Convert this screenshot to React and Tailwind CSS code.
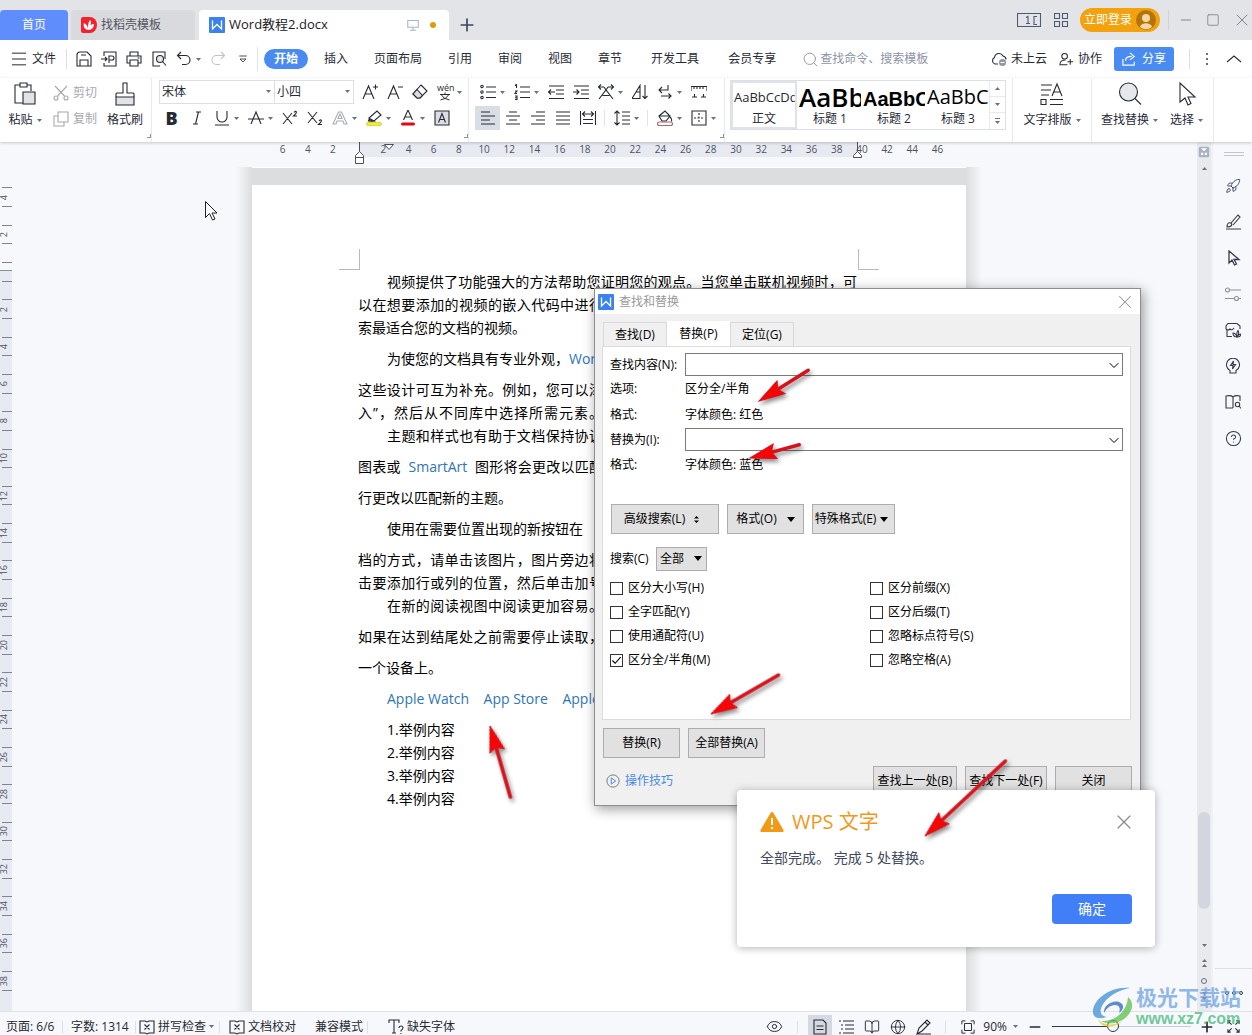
import React, { useState } from 'react';
import { Rocket, HelpCircle, Globe, BookOpen, Minus, Plus, Search, Square, X, Menu, Eye } from 'lucide-react';

const hRuler = ['6', '4', '2', '', '2', '4', '6', '8', '10', '12', '14', '16', '18', '20', '22', '24', '26', '28', '30', '32', '34', '36', '38', '40', '42', '44', '46'];
const vRuler = ['4', '2', '', '2', '4', '6', '8', '10', '12', '14', '16', '18', '20', '22', '24', '26', '28', '30', '32', '34', '36', '38'];

// tall: line has extra space above, full: line is justified to the column
const docLines = [
    { text: '以在想要添加的视频的嵌入代码中进行', full: true },
    { text: '索最适合您的文档的视频。' },
    { text: ['为使您的文档具有专业外观，', { blue: 'Word' }], indent: true, tall: true },
    { text: '这些设计可互为补充。例如，您可以添', tall: true, full: true },
    { text: '入”，然后从不同库中选择所需元素。', full: true },
    { text: '主题和样式也有助于文档保持协调', indent: true, full: true },
    { text: ['图表或\u00a0\u00a0', { blue: 'SmartArt' }, '\u00a0\u00a0图形将会更改以匹配'], tall: true, full: true },
    { text: '行更改以匹配新的主题。', tall: true },
    { text: '使用在需要位置出现的新按钮在', indent: true, tall: true },
    { text: '档的方式，请单击该图片，图片旁边将', tall: true, full: true },
    { text: '击要添加行或列的位置，然后单击加号', full: true },
    { text: '在新的阅读视图中阅读更加容易。', indent: true, full: true },
    { text: '如果在达到结尾处之前需要停止读取，', tall: true, full: true },
    { text: '一个设备上。', tall: true },
    { text: [{ blue: 'Apple Watch' }, '\u00a0\u00a0\u00a0 ', { blue: 'App Store' }, '\u00a0\u00a0\u00a0 ', { blue: 'Apple' }], indent: true, tall: true },
    { text: '1.举例内容', indent: true, tall: true },
    { text: '2.举例内容', indent: true },
    { text: '3.举例内容', indent: true },
    { text: '4.举例内容', indent: true },
];

const leftOptions = [
    { id: 'case', label: '区分大小写(H)' },
    { id: 'whole', label: '全字匹配(Y)' },
    { id: 'wild', label: '使用通配符(U)' },
    { id: 'width', label: '区分全/半角(M)', checked: true },
];

const rightOptions = [
    { id: 'prefix', label: '区分前缀(X)' },
    { id: 'suffix', label: '区分后缀(T)' },
    { id: 'punct', label: '忽略标点符号(S)' },
    { id: 'space', label: '忽略空格(A)' },
];

function Icon({ children, className = 'size-4', box = '0 0 16 16' }) {
    return (
        <svg viewBox={box} fill="none" stroke="currentColor" strokeWidth="1.1" className={`shrink-0 ${className}`} aria-hidden="true">
            {children}
        </svg>
    );
}

function Caret({ className = '' }) {
    return (
        <svg viewBox="0 0 5 3" className={`w-[5px] h-[3px] shrink-0 ${className}`} aria-hidden="true">
            <path d="M0 0h5L2.5 3z" fill="#6b7080" />
        </svg>
    );
}

function Tool({ label, children, caret, active }) {
    return (
        <div className="flex items-center">
            <button type="button" aria-label={label} className={`w-[25px] h-6 flex items-center justify-center ${active ? 'bg-[#d9dee5]' : ''}`}>
                {children}
            </button>
            {caret && <span className="w-[9px] flex items-center"><Caret /></span>}
        </div>
    );
}

function WpsLogo({ className }) {
    return (
        <svg viewBox="0 0 16 16" className={`shrink-0 ${className}`} aria-hidden="true">
            <rect width="16" height="16" rx="1" fill="#3b82ee" />
            <path d="M3.500 3.500v8.500l4.500-4.500 4.500 4.500V3.500" fill="none" stroke="#fff" strokeWidth="1.3" />
        </svg>
    );
}

function TitleBar() {
    return (
        <header className="h-10 bg-[#e2e4e8] flex items-end text-[13px]">
            <button type="button" className="w-[68px] h-[30px] bg-[#5f8dfb] text-white text-xs rounded-t-sm">首页</button>
            <button type="button" className="ml-[3px] w-[124px] h-[30px] bg-[#d9dadd] rounded-t-sm flex items-center gap-1 pl-[10px] text-xs text-[#50535e]">
                <svg viewBox="0 0 16 16" className="size-4" aria-hidden="true">
                    <path d="M2 0h7a7 8 0 0 1 0 16H2a2 2 0 0 1-2-2V2a2 2 0 0 1 2-2z" fill="#f5222d" />
                    <path d="M7 13C3 12 2 9 3 6c2 1 4 3 4 6 0-4 0-6 2-9 2 2 1 5-1 7 1-2 3-3 5-3 0 3-2 6-6 6z" fill="#fff" />
                </svg>
                找稻壳模板
            </button>
            <div className="ml-1 w-[250px] h-[30px] bg-white rounded-t-sm flex items-center pl-[10px] pr-[13px] text-[#1d2029]">
                <WpsLogo className="size-4" />
                <span className="ml-1">Word教程2.docx</span>
                <Icon className="size-3 ml-auto text-[#a9b4c4]"><path d="M1 2h14v9H1zM8 11v4M4 15h8" strokeWidth="1.4" /></Icon>
                <span className="size-1.5 rounded-full bg-[#df9a12] ml-[11px]" />
            </div>
            <button type="button" aria-label="新建" className="h-[30px] w-9 flex items-center justify-center text-[#3c4660]"><Plus size={20} strokeWidth={2} /></button>
            <div className="ml-auto h-10 flex items-center text-[#4f5974]">
                <Icon box="0 0 24 14" className="w-6 h-[14px]">
                    <path d="M.5.5h23v13H.5zM20 3.500h-3v8h3M9 4.500l2-1v7M9 10.500h4" />
                </Icon>
                <Icon box="0 0 14 14" className="size-[14px] ml-[13px]"><path d="M.5.5h5v5h-5zM8.500.5h5v5h-5zM.5 8.500h5v5h-5zM8.500 8.500h5v5h-5z" /></Icon>
                <button type="button" className="ml-3 h-6 w-20 rounded-full bg-[#f3a20d] text-white text-xs flex items-center justify-center gap-1">
                    立即登录
                    <svg viewBox="0 0 20 20" className="size-5" aria-hidden="true">
                        <circle cx="10" cy="10" r="10" fill="#b3740a" />
                        <circle cx="10" cy="8" r="4" fill="#f3d9a8" />
                        <path d="M4 17c1-5 11-5 12 0a10 10 0 0 1-12 0z" fill="#f3d9a8" />
                    </svg>
                </button>
                <span className="w-px h-5 bg-[#cfd2d8] ml-2 mr-[9px]" />
                <button type="button" aria-label="最小化" className="text-[#84878f]"><Minus size={16} strokeWidth={1.5} /></button>
                <button type="button" aria-label="最大化" className="text-[#84878f] ml-3"><Square size={14} strokeWidth={1.5} /></button>
                <button type="button" aria-label="关闭窗口" className="text-[#84878f] ml-3"><X size={20} strokeWidth={1.2} /></button>
            </div>
        </header>
    );
}

function MenuBar() {
    return (
        <nav className="h-[38px] bg-white flex items-center text-xs text-[#262a35] whitespace-nowrap">
            <button type="button" className="flex items-center gap-[3px] pl-[9px]"><Menu size={20} strokeWidth={1.2} />文件</button>
            <span className="w-px h-5 bg-[#dddfe3] ml-[10px] mr-[9px]" />
            <div className="flex items-center gap-[9px]">
                <button type="button" aria-label="保存"><Icon><path d="M1 15V4a3 3 0 0 1 3-3h7l4 4v10zM4 15V9h8v6M5 4h5" /></Icon></button>
                <button type="button" aria-label="输出为PDF"><Icon><path d="M3 5V1h12v14H3v-3M0 8h6M4 6l2 2-2 2M8 12V5h3a2 2 0 0 1 0 4H8" /></Icon></button>
                <button type="button" aria-label="打印"><Icon><path d="M4 5V1h8v4M4 12H1V5h14v7h-3M4 9h8v6H4zM11.500 7h2" /></Icon></button>
                <button type="button" aria-label="打印预览"><Icon><path d="M14 8V1H2v14h7" /><circle cx="9" cy="8" r="3.500" fill="#e4e6ea" /><path d="m11.500 10.500 3.500 4" /></Icon></button>
                <button type="button" aria-label="撤销" className="flex items-center gap-1"><Icon><path d="M5 1 1.500 4.500 5 8M2 4.500h7.500a4.500 4.500 0 0 1 0 9H6" strokeWidth="1.2" /></Icon><Caret /></button>
                <button type="button" aria-label="恢复" className="text-[#c0c3c9]"><Icon><path d="m11 1 3.500 3.500L11 8M14 4.500H6.500a4.500 4.500 0 0 0 0 9H10" /></Icon></button>
            </div>
            <button type="button" aria-label="更多命令" className="ml-[11px]"><Icon className="size-3"><path d="M3 4h10M4 8l4 4 4-4z" /></Icon></button>
            <span className="w-px h-6 bg-[#e1e3e7] ml-2 mr-1.5" />
            <button type="button" className="h-5 w-11 rounded-full bg-[#4a8bf2] text-white font-bold">开始</button>
            <div className="flex gap-[26px] ml-4">
                {['插入', '页面布局', '引用', '审阅', '视图', '章节'].map((t) => <button type="button" key={t}>{t}</button>)}
            </div>
            <div className="flex gap-[29px] ml-[29px]">
                <button type="button">开发工具</button>
                <button type="button">会员专享</button>
            </div>
            <label className="flex items-center ml-[26px] text-[#8d93a5]">
                <Search size={17} strokeWidth={1.3} />
                <input type="text" aria-label="查找命令" placeholder="查找命令、搜索模板" className="w-[130px] ml-px outline-none placeholder:text-[#8d93a5]" />
            </label>
            <div className="ml-auto flex items-center">
                <button type="button" className="flex items-center gap-1">
                    <Icon className="w-4 h-4"><path d="M7 13H4a3.500 3.500 0 0 1-.5-6.500A4.500 4.500 0 0 1 12 5c2 .5 3 2 3 3.500" /><circle cx="11.500" cy="11.500" r="3.500" fill="#8f95a5" stroke="none" /><path d="M9.500 11.500h4" stroke="#fff" /></Icon>
                    未上云
                </button>
                <button type="button" className="flex items-center gap-1 ml-3">
                    <Icon className="size-[15px]"><circle cx="6" cy="4.500" r="3" /><path d="M9 13.500H1C1 10 3 8.500 7 8.500M9 10.500h6M12 7.500v6" /></Icon>
                    协作
                </button>
                <button type="button" className="ml-3 w-[60px] h-6 rounded-[3px] bg-[#4a8bf2] text-white flex items-center justify-center gap-1.5">
                    <Icon className="size-[14px]"><path d="M1 8v7h13v-4M4 10c0-4 3-5 7-5M9 1l5 4-5 4" strokeWidth="1.3" /></Icon>
                    分享
                </button>
                <span className="w-px h-5 bg-[#dddfe3] mx-[15px]" />
                <Icon className="w-1 h-4 text-[#6b7080]" box="0 0 4 16"><path d="M1 3h2M1 8h2M1 13h2" strokeWidth="2" /></Icon>
                <button type="button" aria-label="收起功能区" className="ml-[17px] mr-[10px]"><Icon className="w-4 h-4"><path d="m1 11 7-6 7 6" /></Icon></button>
            </div>
        </nav>
    );
}

function GroupEnd() {
    return <div className="self-stretch flex items-end pb-1"><span className="size-1 border-r border-b border-[#8c909a]" /></div>;
}

function Ribbon() {
    return (
        <section className="h-16 bg-white flex items-start text-xs text-[#262a35] whitespace-nowrap relative z-10 shadow-[0_1px_3px_rgba(0,0,0,0.2)]">
            <div className="h-full flex border-r border-[#e8eaed] pt-0.5">
                <button type="button" className="w-[50px] flex flex-col items-center gap-1.5 pt-0.5 h-14">
                    <Icon box="0 0 22 24" className="w-[22px] h-6"><path d="M9 21H1V3h5M13 3h4v6M6 1h7v4H6z" /><path d="M9 10h12v12H9z" fill="#e2e3e7" /></Icon>
                    <span className="flex items-center gap-1">粘贴<Caret /></span>
                </button>
                <div className="w-[50px] ml-[3px] text-[#a5a8ae] flex flex-col">
                    <button type="button" className="h-[26px] flex items-center gap-1"><Icon><path d="M2 1l9.500 10M14 1 4.500 11" /><circle cx="3" cy="13" r="2" /><circle cx="13" cy="13" r="2" /></Icon>剪切</button>
                    <button type="button" className="h-[26px] flex items-center gap-1"><Icon><path d="M5 1h10v10H5zM5 5H1v10h10v-4" /></Icon>复制</button>
                </div>
                <button type="button" className="w-11 flex flex-col items-center gap-1.5 pt-0.5 h-14">
                    <Icon box="0 0 20 24" className="w-5 h-6"><path d="M1 15h18v8H1z" fill="#e2e3e7" /><path d="M1 15v-3q0-1 1-1h6V1h4v10h6q1 0 1 1v3" /></Icon>
                    格式刷
                </button>
                <GroupEnd />
            </div>

            <div className="h-full flex pl-[7px] pt-0.5 border-r border-[#e8eaed]">
                <div>
                    <div className="flex items-center h-6">
                        <div className="relative">
                            <select aria-label="字体" className="appearance-none w-[116px] h-6 border border-[#dcdfe4] pl-0.5 block"><option>宋体</option></select>
                            <Caret className="absolute right-1 top-[10px]" />
                        </div>
                        <div className="relative">
                            <select aria-label="字号" className="appearance-none w-[79px] h-6 border border-l-0 border-[#dcdfe4] pl-0.5 block"><option>小四</option></select>
                            <Caret className="absolute right-1 top-[10px]" />
                        </div>
                        <span className="w-[3px]" />
                        <Tool label="增大字号"><Icon><path d="M1 15 6.500 2 12 15M3 10h7M11 3h5M13.500.5v5" /></Icon></Tool>
                        <Tool label="减小字号"><Icon><path d="M1 15 6.500 2 12 15M3 10h7M11 3h5" /></Icon></Tool>
                        <Tool label="清除格式"><Icon><path d="M9 1 15 7l-7 7H5L1 10z" /><path d="M5 5.500 10.500 11.500 8 14H5l-4-4z" fill="#dcdee3" /></Icon></Tool>
                        <Tool label="拼音指南" caret>
                            <svg viewBox="0 0 18 18" className="w-[18px] h-[18px] overflow-visible" stroke="currentColor" fill="none" aria-hidden="true">
                                <text x="1" y="8" fontSize="9" fontFamily="Open Sans, sans-serif" fill="currentColor" stroke="none">wén</text>
                                <path d="M4 11.500h10M9 9.500v2M5.500 12q2 4 8 5M12.500 12q-2 4-8 5" />
                            </svg>
                        </Tool>
                    </div>
                    <div className="flex items-center h-7">
                        <Tool label="加粗"><span className="text-lg font-extrabold font-['Open_Sans'] leading-6">B</span></Tool>
                        <Tool label="倾斜"><Icon><path d="M7 2h5M4 14h5M9.500 2l-3 12" /></Icon></Tool>
                        <Tool label="下划线" caret><Icon><path d="M3 1v6a5 5 0 0 0 10 0V1M1 15h14" /></Icon></Tool>
                        <Tool label="删除线" caret><Icon><path d="M3 14 8 2l5 12M0 9h16" /></Icon></Tool>
                        <Tool label="上标"><Icon><path d="M1 3l9 11M10 3 1 14M12 2.500q1.500-2 2.500-.5 0 1.500-3 4H15" /></Icon></Tool>
                        <Tool label="下标"><Icon><path d="M1 2l9 11M10 2 1 13M12 11q1.500-2 2.500-.5 0 1.500-3 4H15" /></Icon></Tool>
                        <Tool label="文字效果" caret><Icon className="size-4 text-[#a9acb3]"><path d="M1 14 6.500 2h3L15 14h-3l-1-3H5l-1 3zM6 8.500h4L8 4z" /></Icon></Tool>
                        <Tool label="突出显示" caret><Icon><path d="M4 11 3 8l8-7 4 4-7 6z" /><path d="M3.500 8.500 8 11H2.500z" fill="#555" /><rect x=".5" y="12.500" width="15" height="3" rx="1.500" fill="#f5f50a" stroke="#b8b84a" strokeWidth=".6" /></Icon></Tool>
                        <Tool label="字体颜色" caret><Icon><path d="M3.500 10 8 0l4.500 10M5 7h6" /><rect x="1" y="12.500" width="14" height="3" rx="1.500" fill="#dc0a14" stroke="none" /></Icon></Tool>
                        <Tool label="字符底纹"><Icon><path d="M1 1h14v14H1z" fill="#dcdee3" /><path d="M4.500 12.500 8 3.500l3.500 9M5.500 9.500h5" /></Icon></Tool>
                    </div>
                </div>
                <div className="w-0.5 flex justify-end"><GroupEnd /></div>
            </div>

            <div className="h-full flex pl-1.5 pt-0.5 border-r border-[#e8eaed]">
                <div>
                    <div className="flex items-center h-6">
                        <Tool label="项目符号" caret><Icon><path d="M6 3h10M6 8h10M6 13.500h10" /><circle cx="2" cy="2.500" r="1.200" /><circle cx="2" cy="8" r="1.200" /><circle cx="2" cy="13.500" r="1.200" /></Icon></Tool>
                        <Tool label="编号" caret><Icon><path d="M6 3h10M6 8h10M6 13.500h10M1 1.500 2.500.5V4M1 7h2L1 9.500h2M1 12h2v3.500H1M1 13.700h2" /></Icon></Tool>
                        <Tool label="减少缩进"><Icon><path d="M1 2h15M8 6h8M8 10h8M1 14.500h15M0 8h7M3 5.500.5 8 3 10.500" /></Icon></Tool>
                        <Tool label="增加缩进"><Icon><path d="M1 2h15M8 6h8M8 10h8M1 14.500h15M0 8h6M3.500 5.500 6 8l-2.500 2.500" /></Icon></Tool>
                        <Tool label="中文版式" caret><Icon><path d="M1 15 8 6l7 9M4.500 11.500h7M0 3h6M10 3h6M3 .5.500 3 3 5.500M13 .5 15.500 3 13 5.500M6 3l2 3 2-3" /></Icon></Tool>
                        <Tool label="排序"><Icon><path d="M0 14.500 8 1.500v13zM4.500 8H8M13 1v13.500M10.500 12 13 14.500l2.500-2.500" /></Icon></Tool>
                        <Tool label="显示段落标记" caret><Icon><path d="M11 1v5H2M5 3 2 6l3 3M4 12h10M11.500 9.500 14 12l-2.500 2.500" /></Icon></Tool>
                        <Tool label="制表位"><Icon><path d="M0 7V2.500h16V7M3 2.500V5M6 2.500V5M9 2.500V5M12 2.500V5M1 13h5M3.500 10v3M10 13h5M12.500 10v3" /></Icon></Tool>
                    </div>
                    <div className="flex items-center h-7">
                        <Tool label="左对齐" active><Icon><path d="M1 2h9M1 6h14M1 10h9M1 14h14" /></Icon></Tool>
                        <Tool label="居中"><Icon><path d="M4 2h8M1 6h14M4 10h8M1 14h14" /></Icon></Tool>
                        <Tool label="右对齐"><Icon><path d="M6 2h9M1 6h14M6 10h9M1 14h14" /></Icon></Tool>
                        <Tool label="两端对齐"><Icon><path d="M1 2h14M1 6h14M1 10h14M1 14h14" /></Icon></Tool>
                        <Tool label="分散对齐"><Icon><path d="M.5 1v14M15.500 1v14M2 4h12M5 1.500 2.500 4 5 6.500M11 1.500 13.500 4 11 6.500M3 9.500h10M3 13.500h10" /></Icon></Tool>
                        <span className="w-px h-4 bg-[#e1e3e7] mx-1" />
                        <Tool label="行距" caret><Icon><path d="M3 1v14M.5 3.500 3 1l2.500 2.500M.5 12.500 3 15l2.500-2.500M8 2h8M8 6h8M8 10h8M8 14h8" /></Icon></Tool>
                        <span className="w-px h-4 bg-[#e1e3e7] mx-1" />
                        <Tool label="底纹颜色" caret><Icon><path d="M3 6h10M2 6l6-5 5 5-4 5H5z" /><rect x=".5" y="12" width="15" height="3.500" rx="1.700" stroke="#a5686c" /><path d="M13 7c2 2 2 4 1 4" /></Icon></Tool>
                        <Tool label="边框" caret><Icon><path d="M1 1h14v14H1z" /><path d="M8 3v10M3 8h10" strokeDasharray="2 1.500" /></Icon></Tool>
                    </div>
                </div>
                <GroupEnd />
            </div>

            <div className="h-full pl-[5px] pr-[6px] pt-0.5 border-r border-[#e8eaed] flex">
                <div className="flex h-[50px] border border-[#dcdfe4]">
                    <button type="button" className="w-[66px] border-2 border-[#dfe2e8] overflow-hidden flex flex-col items-center">
                        <span className="h-7 leading-7 w-full text-left text-[13px] pl-px">AaBbCcDd</span>
                        正文
                    </button>
                    <button type="button" className="w-16 pl-0.5 overflow-hidden flex flex-col items-center pt-0.5">
                        <span className="h-7 leading-7 w-full text-left text-[26px] font-semibold text-black">AaBb</span>
                        标题 1
                    </button>
                    <button type="button" className="w-16 pl-0.5 overflow-hidden flex flex-col items-center pt-0.5">
                        <span className="h-7 leading-8 w-full text-left text-xl font-bold text-black font-['Liberation_Sans']">AaBbC</span>
                        标题 2
                    </button>
                    <button type="button" className="w-16 pl-0.5 overflow-hidden flex flex-col items-center pt-0.5">
                        <span className="h-7 leading-7 w-full text-left text-xl font-medium text-black">AaBbC</span>
                        标题 3
                    </button>
                    <div className="w-4 border-l border-[#e8eaed] grid grid-rows-3 divide-y divide-[#e8eaed]">
                        <button type="button" aria-label="上一行" className="flex items-center justify-center"><Caret className="rotate-180" /></button>
                        <button type="button" aria-label="下一行" className="flex items-center justify-center"><Caret /></button>
                        <button type="button" aria-label="更多样式" className="flex flex-col gap-0.5 items-center justify-center"><span className="w-[5px] h-px bg-[#6b7080]" /><Caret /></button>
                    </div>
                </div>
            </div>

            <button type="button" className="h-full w-[79px] border-r border-[#e8eaed] flex flex-col items-center gap-1.5 pt-1">
                <Icon box="0 0 24 24" className="size-6"><path d="M1 3h11M1 8h10M1 13h8M1 17.500h5v5H1zM10 17.500h13M10 22.500h13M12 14 17 2l5 12M14 10h6" /></Icon>
                <span className="flex items-center gap-1">文字排版<Caret /></span>
            </button>
            <div className="h-full w-[122px] border-r border-[#e8eaed] flex items-start pl-[9px] pt-1 gap-3">
                <button type="button" className="flex flex-col items-center gap-1.5">
                    <Icon box="0 0 24 24" className="size-6"><circle cx="10.500" cy="10" r="9" fill="#e6e7eb" /><path d="m17 16.500 6 6" /></Icon>
                    <span className="flex items-center gap-1">查找替换<Caret /></span>
                </button>
                <button type="button" className="flex flex-col items-center gap-1.5">
                    <Icon box="0 0 24 24" className="size-6"><path d="M5 1v19l5-4 3 7 3-1.500L13 15h7z" /></Icon>
                    <span className="flex items-center gap-1">选择<Caret /></span>
                </button>
            </div>
        </section>
    );
}

function DocLine({ line }) {
    const parts = Array.isArray(line.text) ? line.text : [line.text];
    const width = line.full ? (line.indent ? 'w-[216px] [text-align-last:justify]' : 'w-[245px] [text-align-last:justify]') : '';
    return (
        <p className={`leading-[23px] whitespace-nowrap ${line.tall ? 'pt-2' : ''} ${line.indent ? 'ml-[29px]' : ''} ${width}`}>
            {parts.map((p, i) => (p.blue ? <span key={i} className="text-[#2e75b6]">{p.blue}</span> : p))}
        </p>
    );
}

function VerticalRuler() {
    return (
        <div className="w-3 shrink-0 text-[9px] text-[#4c5262] pt-[37px] bg-[linear-gradient(to_bottom,#f6f8fb_128px,#8a8f98_128px,#8a8f98_129px,#e8eaf2_129px)]">
            <div className="h-[821px] flex flex-col">
                {vRuler.map((n, i) => (
                    <div key={i} className="flex-1 flex flex-col pl-0.5">
                        <div className="h-1/4 border-b border-[#7e8492]" />
                        <div className="h-1/2 border-b border-[#7e8492] flex items-center">
                            <span className="[writing-mode:vertical-rl] rotate-180 leading-3 -ml-1">{n}</span>
                        </div>
                    </div>
                ))}
            </div>
        </div>
    );
}

function Canvas() {
    return (
        <main className="flex-1 flex flex-col items-center pl-[9px] overflow-hidden">
            <div className="w-[714px] h-[25px] shrink-0 relative">
                <div className="h-[15px] ml-[107px] mr-[109px] bg-[#e8eaf2]" />
                <div className="absolute left-[18px] top-0 w-[680px] flex text-[10px] leading-[15px] text-[#4c5262]">
                    {hRuler.map((n, i) => <span key={i} className="flex-1 text-center">{n}</span>)}
                </div>
                <svg className="absolute left-[101px] top-0 w-3 h-6" fill="#fff" stroke="#4c5262" aria-hidden="true">
                    <path d="M6.500 0v10" /><path d="M2.500 21.500v-8l4-4 4 4v8zM2.500 15.500h8" />
                </svg>
                <svg className="absolute left-[131px] top-0 w-3 h-6" fill="#fff" stroke="#4c5262" aria-hidden="true">
                    <path d="M1.500 2.500h9l-4.500 5z" />
                </svg>
                <svg className="absolute left-[599px] top-0 w-3 h-6" fill="#fff" stroke="#4c5262" aria-hidden="true">
                    <path d="M6.500 0v10" /><path d="M2.500 15.500v-2l4-4 4 4v2z" />
                </svg>
            </div>
            <div className="flex-1 flex">
                <div className="w-4 bg-linear-to-l from-[#dcddde] to-[#f6f8fb]" />
                <div className="w-[714px] flex flex-col">
                    <div className="h-[18px] shrink-0 bg-[#dcddde] border-t border-white" />
                    <article className="flex-1 bg-white pt-16 pl-[106px] pr-[109px] text-sm text-black">
                        <div className="flex justify-between -ml-[19px] -mr-[22px]">
                            <span className="w-[21px] h-[21px] border-r border-b border-[#b9b9b9]" />
                            <span className="w-[21px] h-[21px] border-l border-b border-[#b9b9b9]" />
                        </div>
                        <p className="ml-[29px] leading-[23px] whitespace-nowrap [text-align-last:justify]">视频提供了功能强大的方法帮助您证明您的观点。当您单击联机视频时，可</p>
                        {docLines.map((line, i) => <DocLine key={i} line={line} />)}
                    </article>
                </div>
                <div className="w-4 bg-linear-to-r from-[#dcddde] to-[#f6f8fb]" />
            </div>
        </main>
    );
}

function ScrollBar() {
    return (
        <div className="w-4 shrink-0 bg-[#e8eaee] border-r-2 border-[#eff1f5] flex flex-col items-center pt-1 pb-[7px]">
            <Icon className="size-3"><rect x="1" y="1" width="14" height="14" rx="2" fill="#a9b2c3" stroke="none" /><path d="M4 3h8L8 7zM4 9h3v3H4zM9 9h3v3H9z" fill="#fff" stroke="none" /></Icon>
            <Caret className="rotate-180 mt-[9px]" />
            <div className="mt-auto w-3 h-[97px] rounded-full bg-[#d3d5df]" />
            <Caret className="mt-[35px]" />
            <Caret className="rotate-180 mt-3" />
            <Caret className="rotate-180 mt-0.5" />
            <span className="mt-[11px] size-1.5 rounded-full border border-[#6b7080]" />
            <Caret className="mt-2" />
            <Caret className="mt-0.5 mb-1" />
        </div>
    );
}

function SidePanel() {
    return (
        <aside className="w-[39px] shrink-0 bg-[#f6f8fb] flex flex-col items-center pt-[10px] pl-0.5 text-[#343a4a]">
            <span className="w-5 h-1 border-y border-[#c3c6cd]" />
            <div className="flex flex-col gap-5 mt-[22px]">
                <button type="button" aria-label="快捷"><Rocket size={16} strokeWidth={1.5} className="block text-[#4b5674]" /></button>
                <button type="button" aria-label="样式"><Icon className="size-4 block"><path d="M1 15h15M2 13c0-3 1-5 4-4 2 2 0 4-4 4zM6 9l7-8 2 2-7 8" /></Icon></button>
                <button type="button" aria-label="选择窗格"><Icon className="size-4 block"><path d="M4 1v12l3-3 2.500 5 2-1L9 9.500h5z" strokeWidth="1.3" /></Icon></button>
                <button type="button" aria-label="属性"><Icon className="size-4 block text-[#8c909b]"><circle cx="2.500" cy="4" r="2" /><path d="M4.500 4H16M0 12.500h9.500M13.500 12.500H16" /><circle cx="11.500" cy="12.500" r="2" /></Icon></button>
                <button type="button" aria-label="素材"><Icon className="size-4 block"><path d="M7 14.500H2V8M1 7V4l2-2.500h9L15 4v3M1 7q2 2 4 0 2 2 4-1" /><path d="M12 15c-3 0-4-2-4-4 2 0 3 1 4 4zc-1-3 0-5 1-6.500 1 2 1 4-1 6.500zc1-2 2-3 4-3 0 2-2 3-4 3z" /></Icon></button>
                <button type="button" aria-label="提示"><Icon className="size-4 block"><path d="M5 12.500a6.500 6.500 0 1 1 6 0V15H5zM8.500 3 5.500 7.500H8L7.500 11l3-4.500H8z" /></Icon></button>
                <button type="button" aria-label="查阅"><Icon className="size-4 block"><path d="M8 14H1V2q5-1 7 1 2-2 7-1v5M8 3v11" /><circle cx="12.500" cy="10.500" r="2.200" /><path d="m14 12 2 2.500" /></Icon></button>
                <button type="button" aria-label="帮助"><HelpCircle size={17} strokeWidth={1.5} className="block" /></button>
            </div>
            <div className="mt-auto w-full border-t border-[#dddfe4] h-[43px] pt-[22px] flex justify-center gap-[3px]">
                <span className="size-1 rounded-full border border-[#343a4a]" />
                <span className="size-1 rounded-full border border-[#343a4a]" />
                <span className="size-1 rounded-full border border-[#343a4a]" />
            </div>
        </aside>
    );
}

function StatusBar() {
    const [zoom, setZoom] = useState(43);
    const divider = <span className="w-px h-3 bg-[#dddfe4]" />;
    return (
        <footer className="h-6 shrink-0 border-t border-[#dfe2e6] bg-[#f6f8fb] overflow-hidden text-xs text-[#262a35] whitespace-nowrap">
            <div className="h-[29px] flex items-center pl-1.5 pr-[11px]">
                <span className="w-14">页面: 6/6</span>{divider}
                <span className="w-[72px] pl-2">字数: 1314</span>{divider}
                <button type="button" className="flex items-center gap-[3px] ml-[3px] mr-[5px]">
                    <Icon><path d="M1 2h5l2 1 2-1h5v12h-5l-2 1-2-1H1zM5.500 5.500l5 5M10.500 5.500l-5 5" /></Icon>拼写检查<Caret />
                </button>
                {divider}
                <button type="button" className="flex items-center gap-[3px] ml-[9px]">
                    <Icon><path d="M1 2h5l2 1 2-1h5v12h-5l-2 1-2-1H1zM5.500 5.500l5 5M10.500 5.500l-5 5" /></Icon>文档校对
                </button>
                <span className="ml-[19px] mr-1">兼容模式</span>{divider}
                <button type="button" className="flex items-center gap-[3px] ml-5">
                    <Icon><path d="M1 4V1h10v3M6 1v13M4 14h4M11 9q0-2 2-2t2 2q0 1-2 2.500v1M13 14v1" /></Icon>缺失字体
                </button>
                <div className="ml-auto flex items-center">
                    <button type="button" aria-label="护眼模式"><Eye size={17} strokeWidth={1.4} /></button>
                    <span className="w-px h-3 bg-[#dddfe4] ml-[14px] mr-[10px]" />
                    <button type="button" aria-label="页面视图" className="w-6 h-6 bg-[#d5dae2] flex items-center justify-center"><Icon><path d="M2 1h9l3 3v11H2zM4.500 7h7M4.500 10.500h7" /></Icon></button>
                    <div className="flex items-center gap-[10px] ml-1.5">
                        <button type="button" aria-label="大纲"><Icon><path d="M1 2h2M5 2h11M3 6h2M7 6h9M3 10h2M7 10h9M1 14h2M5 14h11" /></Icon></button>
                        <button type="button" aria-label="阅读版式"><BookOpen size={16} strokeWidth={1.4} /></button>
                        <button type="button" aria-label="Web版式"><Globe size={16} strokeWidth={1.4} /></button>
                        <button type="button" aria-label="写作模式"><Icon><path d="M1 15h14M1 15l2-6 8-8 3 3-8 8zM9 3l3 3" /></Icon></button>
                    </div>
                    <span className="w-px h-3 bg-[#dddfe4] ml-[13px] mr-[15px]" />
                    <button type="button" aria-label="最佳显示比例"><Icon className="size-[14px]"><path d="M1 5V1h4M11 1h4v4M15 11v4h-4M5 15H1v-4M4 4h8v8H4z" /></Icon></button>
                    <button type="button" className="flex items-center gap-1.5 ml-2">90%<Caret /></button>
                    <button type="button" aria-label="缩小" className="ml-[9px]"><Minus size={16} strokeWidth={2.5} /></button>
                    <input
                        type="range" aria-label="显示比例" value={zoom} onChange={(e) => setZoom(e.target.value)}
                        className="ml-[9px] w-[139px] h-4 appearance-none bg-transparent [&::-webkit-slider-runnable-track]:h-px [&::-webkit-slider-runnable-track]:bg-linear-to-r [&::-webkit-slider-runnable-track]:from-[#343a4a] [&::-webkit-slider-runnable-track]:from-45% [&::-webkit-slider-runnable-track]:to-[#c9ccd3] [&::-webkit-slider-runnable-track]:to-45% [&::-webkit-slider-thumb]:appearance-none [&::-webkit-slider-thumb]:size-3 [&::-webkit-slider-thumb]:-mt-1.5 [&::-webkit-slider-thumb]:rounded-full [&::-webkit-slider-thumb]:border [&::-webkit-slider-thumb]:border-[#343a4a] [&::-webkit-slider-thumb]:bg-[#f6f8fb]"
                    />
                    <button type="button" aria-label="放大" className="ml-2"><Plus size={16} strokeWidth={2.5} /></button>
                    <button type="button" aria-label="全屏" className="ml-[11px]"><Icon className="size-[15px]"><path d="M6 6 2 2M2 5V2h3M10 6l4-4M11 2h3v3M6 10l-4 4M2 11v3h3M10 10l4 4M14 11v3h-3" /></Icon></button>
                </div>
            </div>
        </footer>
    );
}

function Combo({ id }) {
    return (
        <div className="relative">
            <select id={id} className="appearance-none block w-full h-[23px] border border-[#7a7a7a] bg-white"><option></option></select>
            <Icon className="size-[10px] absolute right-1 top-[7px]"><path d="m1 5 7 7 7-7" strokeWidth="1.600" /></Icon>
        </div>
    );
}

function Option({ option }) {
    return (
        <label htmlFor={option.id} className="h-6 flex items-center gap-[5px]">
            <span className="relative size-[13px]">
                <input id={option.id} type="checkbox" defaultChecked={option.checked} className="peer appearance-none block size-[13px] border border-[#333] bg-white" />
                <Icon className="size-[11px] absolute left-px top-px hidden peer-checked:block pointer-events-none"><path d="m2 8 4 4 8-9" strokeWidth="1.600" /></Icon>
            </span>
            {option.label}
        </label>
    );
}

const btn = 'border border-[#adadad] bg-[#e1e1e1] flex items-center justify-center';

function FindDialog() {
    return (
        <section role="dialog" aria-label="查找和替换" className="absolute left-[594px] top-[288px] w-[547px] h-[518px] bg-[#f0f0f0] border border-[#8e8e8e] shadow-[2px_3px_12px_rgba(0,0,0,0.4)] text-xs text-black whitespace-nowrap flex flex-col">
            <div className="h-[25px] bg-white flex items-center pl-[3px] pr-1 text-[#999]">
                <WpsLogo className="size-4" />
                <span className="ml-[5px]">查找和替换</span>
                <button type="button" aria-label="关闭对话框" className="ml-auto"><X size={22} strokeWidth={1.100} /></button>
            </div>
            <div className="flex items-end h-8 pl-2">
                <button type="button" className="w-16 h-6 border border-b-0 border-[#d9d9d9]">查找(D)</button>
                <button type="button" className="w-[63px] h-[25px] bg-white">替换(P)</button>
                <button type="button" className="w-16 h-6 border border-b-0 border-[#d9d9d9]">定位(G)</button>
            </div>
            <div className="ml-[7px] mr-[9px] h-[374px] bg-white border border-[#dcdcdc] px-[7px] pt-1.5">
                <div className="grid grid-cols-[75px_1fr] items-center">
                    <label htmlFor="find">查找内容(N):</label><Combo id="find" />
                    <span className="leading-[26px]">选项:</span><span>区分全/半角</span>
                    <span className="leading-[26px]">格式:</span><span>字体颜色: 红色</span>
                    <label htmlFor="replace">替换为(I):</label><Combo id="replace" />
                    <span className="leading-[28px]">格式:</span><span>字体颜色: 蓝色</span>
                </div>
                <div className="flex gap-2 mt-[25px] pl-px">
                    <button type="button" className={`${btn} w-[108px] h-[30px] gap-2 pr-1.5`}>
                        高级搜索(L)
                        <svg viewBox="0 0 7 9" className="w-[7px] h-[9px]" aria-hidden="true"><path d="M1 3.500 3.500 1 6 3.500zM1 5.500h5L3.500 8zM1 5.500" /></svg>
                    </button>
                    <button type="button" className={`${btn} w-[77px] h-[30px] gap-[10px]`}>
                        格式(O)
                        <svg viewBox="0 0 8 5" className="w-2 h-[5px]" aria-hidden="true"><path d="M0 0h8L4 5z" /></svg>
                    </button>
                    <button type="button" className={`${btn} w-[83px] h-[30px] gap-1 pr-1`}>
                        特殊格式(E)
                        <svg viewBox="0 0 8 5" className="w-2 h-[5px]" aria-hidden="true"><path d="M0 0h8L4 5z" /></svg>
                    </button>
                </div>
                <div className="flex items-center mt-[13px]">
                    <label htmlFor="scope" className="w-[46px]">搜索(C)</label>
                    <div className="relative">
                        <select id="scope" className="appearance-none block w-[51px] h-6 border border-[#adadad] bg-[#e1e1e1] pl-[3px]"><option>全部</option></select>
                        <svg viewBox="0 0 8 5" className="w-2 h-[5px] absolute right-[5px] top-[9px] pointer-events-none" aria-hidden="true"><path d="M0 0h8L4 5z" /></svg>
                    </div>
                </div>
                <div className="grid grid-cols-[260px_1fr] mt-[5px]">
                    <div>{leftOptions.map((o) => <Option key={o.id} option={o} />)}</div>
                    <div>{rightOptions.map((o) => <Option key={o.id} option={o} />)}</div>
                </div>
            </div>
            <div className="flex gap-2 mt-2 pl-2">
                <button type="button" className={`${btn} w-[77px] h-[30px]`}>替换(R)</button>
                <button type="button" className={`${btn} w-[77px] h-[30px]`}>全部替换(A)</button>
            </div>
            <div className="flex gap-2 mt-2 pl-[11px] pr-2">
                <a href="#tips" className="flex items-center gap-[5px] text-[#4a8be0] mr-auto">
                    <Icon className="size-[14px] text-[#777]"><circle cx="8" cy="8" r="7" /><path d="M6 4.500v7l5-3.500z" stroke="#4a8be0" /></Icon>
                    操作技巧
                </a>
                <button type="button" className={`${btn} w-[84px] h-[30px]`}>查找上一处(B)</button>
                <button type="button" className={`${btn} w-[82px] h-[30px]`}>查找下一处(F)</button>
                <button type="button" className={`${btn} w-[77px] h-[30px]`}>关闭</button>
            </div>
        </section>
    );
}

function MessageBox() {
    return (
        <section role="alertdialog" aria-label="WPS 文字" className="absolute left-[737px] top-[790px] w-[418px] h-[157px] bg-white rounded-sm shadow-[0_1px_8px_rgba(0,0,0,0.3)] px-[23px] py-[18px] flex flex-col">
            <div className="flex items-center h-7">
                <svg viewBox="0 0 24 20" className="w-6 h-5" aria-hidden="true">
                    <path d="M12 0q1 0 1.500 1l10 17q.5 2-1 2h-21q-1.500 0-1-2l10-17Q11 0 12 0z" fill="#f09a16" />
                    <path d="M11 6h2v7h-2zM11 15h2v2h-2z" fill="#fff" />
                </svg>
                <h2 className="ml-2 text-xl text-[#ec9a1e]">WPS 文字</h2>
                <button type="button" aria-label="关闭提示" className="ml-auto -mr-1 text-[#888c96]"><X size={24} strokeWidth={1.200} /></button>
            </div>
            <p className="text-sm text-[#414a60] mt-3">全部完成。 完成 5 处替换。</p>
            <button type="button" className="mt-auto ml-auto w-20 h-[30px] mb-[5px] rounded-sm bg-[#417ff9] text-white text-sm">确定</button>
        </section>
    );
}

// x/y is the tip, angle points along the shaft
const arrows = [
    { x: 759, y: 401, angle: -32, length: 59 },
    { x: 750, y: 458, angle: -15, length: 52 },
    { x: 711, y: 714, angle: -30, length: 79 },
    { x: 490, y: 726, angle: 74, length: 75 },
    { x: 925, y: 836, angle: -43, length: 111 },
];

function Annotations() {
    return (
        <svg className="absolute inset-0 w-full h-full pointer-events-none" aria-hidden="true">
            <g className="drop-shadow-[2px_3px_2px_rgba(0,0,0,0.45)]">
                {arrows.map((a) => (
                    <g key={a.x} transform={`translate(${a.x} ${a.y}) rotate(${a.angle})`}>
                        <path d={`M20 0H${a.length - 1}`} stroke="#d8101a" strokeWidth="3.500" strokeLinecap="round" />
                        <path d="M0 0 26-7.500 22 0 26 7.500z" fill="#f80404" stroke="#d8101a" />
                    </g>
                ))}
            </g>
            <path d="M205.500 201.500v16l4-4 3 6.500 2.500-1-3-6h5z" fill="#fff" stroke="#222" />
        </svg>
    );
}

function Watermark() {
    return (
        <div className="absolute right-[11px] bottom-1.5 flex items-center opacity-75 pointer-events-none whitespace-nowrap">
            <svg viewBox="0 0 44 42" className="w-11 h-[42px]" aria-hidden="true">
                <path d="M38 2C18 0 0 14 1 27c1 6 8 6 14 4-6-1-8-5-5-11C14 11 26 4 38 2z" fill="#3f8fd8" />
                <path d="M12 27c-1-7 8-13 15-11 6 2 5 8 0 11 2-5 0-8-4-8-5 0-9 4-11 8z" fill="#2f66b8" />
                <path d="M36 11c8 6 4 20-10 25-6 2-12 2-17-1 12 1 26-8 27-24z" fill="#5cbf4a" />
                <path d="M6 33c5 7 16 7 24 2-5 6-20 10-24-2z" fill="#e5c93a" />
            </svg>
            <div className="flex flex-col">
                <span className="text-[21px] leading-6 font-bold text-[#6fa3e0]">极光下载站</span>
                <span className="text-base leading-5 font-semibold text-[#45b97c] font-['Liberation_Sans']">www.xz7.com</span>
            </div>
        </div>
    );
}

export default function App() {
    return (
        <div className="relative h-screen flex flex-col overflow-hidden bg-[#f6f8fb] font-['Open_Sans','Noto_Sans_CJK_SC',sans-serif]">
            <TitleBar />
            <MenuBar />
            <Ribbon />
            <div className="flex-1 min-h-0 flex">
                <VerticalRuler />
                <Canvas />
                <ScrollBar />
                <SidePanel />
            </div>
            <StatusBar />
            <FindDialog />
            <MessageBox />
            <Annotations />
            <Watermark />
        </div>
    );
}
